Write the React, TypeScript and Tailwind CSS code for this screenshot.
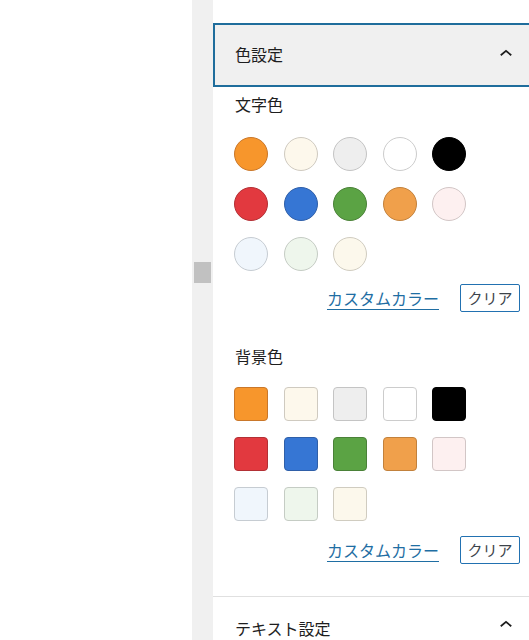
const textColors = [
  { c: "#f7962c", b: "#c9772a" },
  { c: "#fdf8ec", b: "#cfcac0" },
  { c: "#eeeeee", b: "#c4c4c4" },
  { c: "#ffffff", b: "#cccccc" },
  { c: "#000000", b: "#000000" },
  { c: "#e2393f", b: "#b23035" },
  { c: "#3676d4", b: "#2f5fa8" },
  { c: "#5ba344", b: "#4a8138" },
  { c: "#f0a04b", b: "#c2813c" },
  { c: "#fdf0f0", b: "#d2c6c6" },
  { c: "#f0f6fc", b: "#c6ccd2" },
  { c: "#eef6ec", b: "#c5ccc4" },
  { c: "#fcf8ec", b: "#d0ccc0" },
];

function ChevronUp() {
  return (
    <svg width="24" height="24" viewBox="0 0 24 24" className="fill-[#1e1e1e]">
      <path d="M6.2 12.6L12 7.8l5.8 4.8-1.1 1.3L12 10.1l-4.7 3.8-1.1-1.3z" />
    </svg>
  );
}

function Swatches({ round }: { round: boolean }) {
  return (
    <div className="grid grid-cols-[repeat(5,34px)] gap-x-[15.5px] gap-y-[16px]">
      {textColors.map((s, i) => (
        <div
          key={i}
          className={`w-[34px] h-[34px] border ${round ? "rounded-full" : "rounded-[4px]"}`}
          style={{ backgroundColor: s.c, borderColor: s.b }}
        />
      ))}
    </div>
  );
}

function CustomRow() {
  return (
    <div className="flex items-center justify-end gap-[21px] w-[286px] h-[28px]">
      <a className="text-[16px] leading-[20px] text-[#1f6ea3] underline underline-offset-[4px] cursor-pointer">
        カスタムカラー
      </a>
      <button className="w-[60px] h-[28px] border border-[#2271b1] rounded-[2px] text-[15px] text-[#3c434a] bg-white">
        クリア
      </button>
    </div>
  );
}

export default function App() {
  return (
    <div
      className="flex h-[640px] w-[529px] overflow-hidden bg-white text-[#1e1e1e]"
      style={{ fontFamily: '"Noto Sans CJK JP", "Noto Sans", sans-serif' }}
    >
      <div className="w-[192px] shrink-0 bg-white" />
      <div className="w-[21px] shrink-0 bg-[#f0f0f0] pt-[262px] flex justify-center">
        <div className="w-[17px] h-[21px] bg-[#c1c1c1]" />
      </div>
      <div className="w-[324px] shrink-0 bg-white flex flex-col">
        <div className="h-[23px] shrink-0" />
        <div className="h-[64px] shrink-0 border-2 border-[#1f6d9c] bg-[#f0f0f0] flex items-center justify-between pl-[20px] pr-[18px]">
          <span className="text-[16px] -mt-[2px]">色設定</span>
          <span className="-mr-[1px] -mt-[3px]"><ChevronUp /></span>
        </div>
        <div className="shrink-0 pl-[21px] pt-[5px]">
          <div className="text-[16px] leading-[24px] pl-[1px]">文字色</div>
          <div className="mt-[21px]">
            <Swatches round />
          </div>
          <div className="mt-[13px]">
            <CustomRow />
          </div>
          <div className="mt-[32px] text-[16px] leading-[24px] pl-[1px]">背景色</div>
          <div className="mt-[19px]">
            <Swatches round={false} />
          </div>
          <div className="mt-[15px]">
            <CustomRow />
          </div>
        </div>
        <div className="shrink-0 mt-[32px] border-t border-[#e0e0e0] h-[64px] flex items-center justify-between pl-[22px] pr-[18px]">
          <span className="text-[16px] -mt-[2px]">テキスト設定</span>
          <span className="mr-[1px] -mt-[8px]"><ChevronUp /></span>
        </div>
      </div>
    </div>
  );
}
